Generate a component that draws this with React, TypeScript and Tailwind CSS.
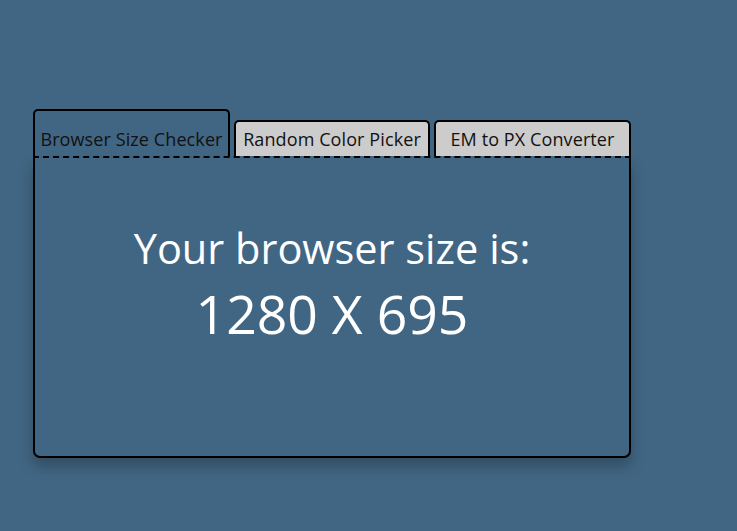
import React from "react";

export default function App() {
  const font = { fontFamily: '"Open Sans", "Noto Sans", sans-serif' };
  return (
    <div className="min-h-[531px] w-full bg-[#416683] pl-[33px] pt-[109px]" style={font}>
      <div className="w-[598px]">
        <div className="flex items-end gap-[4px]">
          <div className="flex h-[47px] w-[197px] items-center justify-center rounded-t-[5px] border-2 border-b-0 border-black bg-[#416683] pt-[11px] text-[18px] tracking-[0.1px] text-[#111]">
            Browser Size Checker
          </div>
          <div className="flex h-[36px] w-[196px] items-center justify-center rounded-t-[5px] border-2 border-b-0 border-black bg-[#cccccc] pt-[1px] text-[18px] tracking-[0.1px] text-[#111]">
            Random Color Picker
          </div>
          <div className="flex h-[36px] w-[197px] items-center justify-center rounded-t-[5px] border-2 border-b-0 border-black bg-[#cccccc] pt-[1px] text-[18px] tracking-[0.1px] text-[#111]">
            EM to PX Converter
          </div>
        </div>
        <div className="h-[2px] border-t-2 border-dashed border-black" />
        <div className="flex h-[300px] flex-col items-center rounded-b-[7px] border-2 border-t-0 border-black bg-[#416683] pt-[66px] text-white shadow-[0_8px_14px_rgba(0,0,0,0.25)]">
          <div className="text-[41.5px] leading-[48px]">Your browser size is:</div>
          <div className="mt-[12px] text-[53.5px] leading-[60px]">1280 X 695</div>
        </div>
      </div>
    </div>
  );
}
